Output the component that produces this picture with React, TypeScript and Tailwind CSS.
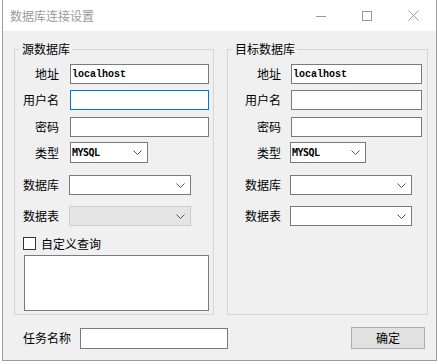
import React from "react";

const cjk = "font-['Noto_Sans_CJK_SC','Noto_Sans',sans-serif]";
const mono = "font-['Liberation_Mono',monospace]";

function Chevron() {
  return (
    <svg width="9" height="5" viewBox="0 0 9 5" className="shrink-0">
      <polyline points="0.5,0.5 4.5,4.5 8.5,0.5" fill="none" stroke="#555" strokeWidth="1" />
    </svg>
  );
}

function TextBox({ w, value = "", focused = false }: { w: string; value?: string; focused?: boolean }) {
  return (
    <div
      className={`h-[20px] ${w} border ${focused ? "border-[#0078d7]" : "border-[#7a7a7a]"} bg-white flex items-center pl-[1px] text-[10px] font-bold text-black ${mono}`}
    >
      {value}
    </div>
  );
}

function Select({ w, value = "", disabled = false, h = "h-[20px]" }: { w: string; value?: string; disabled?: boolean; h?: string }) {
  return (
    <div
      className={`${h} ${w} border ${disabled ? "border-[#cccccc] bg-[#e5e5e5]" : "border-[#7a7a7a] bg-white"} flex items-center pl-[1px] pr-[5px] text-[10px] font-bold text-black font-['DejaVu_Sans_Mono',monospace] tracking-[-0.5px]`}
    >
      <span className="flex-1">{value}</span>
      <Chevron />
    </div>
  );
}

function Row({ labelW, gap, label, children, mt }: { labelW: string; gap: string; label: string; children: React.ReactNode; mt: string }) {
  return (
    <div className={`flex items-center ${mt}`}>
      <div className={`${labelW} text-right text-[12px] leading-[16px] text-black ${cjk}`}>{label}</div>
      <div className={gap}>{children}</div>
    </div>
  );
}

function Group({ title, w, children }: { title: string; w: string; children: React.ReactNode }) {
  return (
    <div className={`relative h-[266px] ${w} border border-[#d5d5d5]`}>
      <span className={`absolute left-[5px] top-[-9px] bg-[#f0f0f0] px-[2px] text-[12px] leading-[16px] text-black ${cjk}`}>
        {title}
      </span>
      {children}
    </div>
  );
}

export default function App() {
  return (
    <div className="min-h-screen w-full bg-white">
      <div className="ml-[2px] w-[435px] h-[361px] border-x border-b border-[#9c9c9c] bg-[#f0f0f0] flex flex-col">
        {/* title bar */}
        <div className="h-[31px] bg-white flex items-center">
          <div className={`pl-[7px] flex-1 text-[12px] text-[#9a9a9a] ${cjk}`}>数据库连接设置</div>
          <div className="w-[46px] h-[31px] flex items-center justify-center">
            <svg width="10" height="10" viewBox="0 0 10 10">
              <line x1="0" y1="5.5" x2="10" y2="5.5" stroke="#9a9a9a" strokeWidth="1" />
            </svg>
          </div>
          <div className="w-[46px] h-[31px] flex items-center justify-center">
            <svg width="10" height="10" viewBox="0 0 10 10">
              <rect x="0.5" y="0.5" width="9" height="9" fill="none" stroke="#9a9a9a" strokeWidth="1" />
            </svg>
          </div>
          <div className="w-[46px] h-[31px] flex items-center justify-center">
            <svg width="11" height="11" viewBox="0 0 11 11">
              <line x1="0.5" y1="0.5" x2="10.5" y2="10.5" stroke="#9a9a9a" strokeWidth="1" />
              <line x1="10.5" y1="0.5" x2="0.5" y2="10.5" stroke="#9a9a9a" strokeWidth="1" />
            </svg>
          </div>
        </div>

        {/* groups */}
        <div className="mt-[18px] pl-[11px] flex gap-[13px]">
          <Group title="源数据库" w="w-[200px]">
            <div className="flex flex-col">
              <Row mt="mt-[14px]" labelW="w-[44px]" gap="ml-[11px]" label="地址">
                <TextBox w="w-[139px]" value="localhost" />
              </Row>
              <Row mt="mt-[6px]" labelW="w-[44px]" gap="ml-[11px]" label="用户名">
                <TextBox w="w-[139px]" focused />
              </Row>
              <Row mt="mt-[7px]" labelW="w-[44px]" gap="ml-[11px]" label="密码">
                <TextBox w="w-[139px]" />
              </Row>
              <Row mt="mt-[5px]" labelW="w-[44px]" gap="ml-[11px]" label="类型">
                <Select w="w-[78px]" h="h-[21px]" value="MYSQL" />
              </Row>
              <Row mt="mt-[12px]" labelW="w-[44px]" gap="ml-[10px]" label="数据库">
                <Select w="w-[122px]" />
              </Row>
              <Row mt="mt-[11px]" labelW="w-[44px]" gap="ml-[10px]" label="数据表">
                <Select w="w-[122px]" disabled />
              </Row>
              <div className="mt-[11px] ml-[8px] h-[13px] flex items-center">
                <div className="w-[13px] h-[13px] border border-[#333333] bg-white" />
                <span className={`ml-[5px] text-[12px] leading-[13px] text-black ${cjk}`}>自定义查询</span>
              </div>
              <div className="mt-[5px] ml-[9px] w-[185px] h-[56px] border border-[#7a7a7a] bg-white" />
            </div>
          </Group>
          <Group title="目标数据库" w="w-[201px]">
            <div className="flex flex-col">
              <Row mt="mt-[14px]" labelW="w-[53px]" gap="ml-[10px]" label="地址">
                <TextBox w="w-[131px]" value="localhost" />
              </Row>
              <Row mt="mt-[6px]" labelW="w-[53px]" gap="ml-[10px]" label="用户名">
                <TextBox w="w-[131px]" />
              </Row>
              <Row mt="mt-[7px]" labelW="w-[53px]" gap="ml-[10px]" label="密码">
                <TextBox w="w-[131px]" />
              </Row>
              <Row mt="mt-[5px]" labelW="w-[53px]" gap="ml-[9px]" label="类型">
                <Select w="w-[76px]" h="h-[21px]" value="MYSQL" />
              </Row>
              <Row mt="mt-[12px]" labelW="w-[53px]" gap="ml-[9px]" label="数据库">
                <Select w="w-[122px]" />
              </Row>
              <Row mt="mt-[11px]" labelW="w-[53px]" gap="ml-[9px]" label="数据表">
                <Select w="w-[122px]" />
              </Row>
            </div>
          </Group>
        </div>

        {/* bottom row */}
        <div className="mt-[12px] pl-[20px] pr-[11px] flex items-center h-[22px]">
          <span className={`text-[12px] leading-[16px] text-black ${cjk}`}>任务名称</span>
          <div className="ml-[9px] w-[148px] h-[21px] border border-[#7a7a7a] bg-white" />
          <div
            className={`ml-auto w-[74px] h-[22px] border border-[#adadad] bg-[#e1e1e1] flex items-center justify-center text-[12px] text-black ${cjk}`}
          >
            确定
          </div>
        </div>
      </div>
    </div>
  );
}
